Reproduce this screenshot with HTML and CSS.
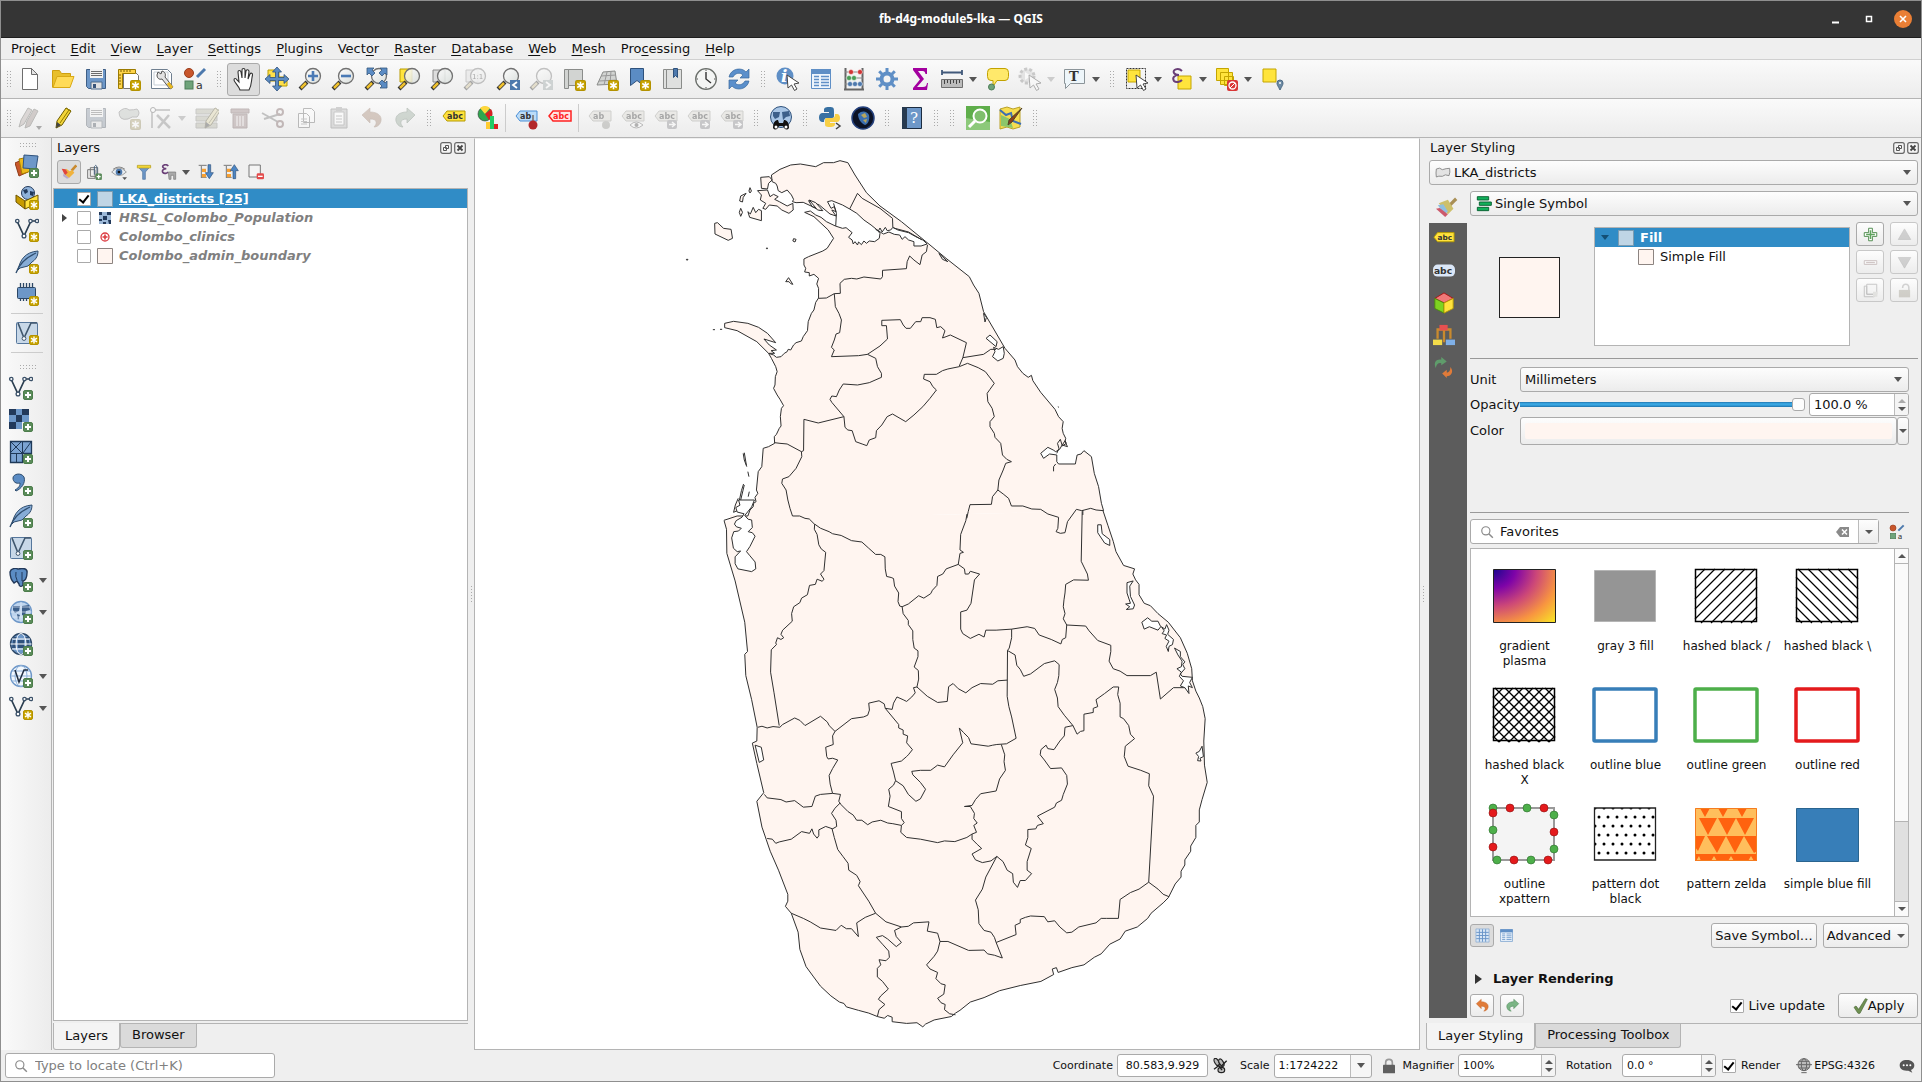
FILE: index.html
```html
<!DOCTYPE html>
<html lang="en">
<head>
<meta charset="utf-8">
<title>fb-d4g-module5-lka — QGIS</title>
<link rel="stylesheet" href="styles.css">
</head>
<body>
<svg class="sprite" aria-hidden="true">
<defs>
<radialGradient id="plasma-r" cx="0" cy="0" r="1.4"><stop offset="0" stop-color="#1c0690"/><stop offset=".25" stop-color="#7e03a8"/><stop offset=".5" stop-color="#cc4778"/><stop offset=".75" stop-color="#f89540"/><stop offset="1" stop-color="#f8e625"/></radialGradient>
<linearGradient id="glass" x1="0" y1="0" x2="1" y2="1"><stop offset="0" stop-color="#fff"/><stop offset="1" stop-color="#d5dbd8"/></linearGradient>
<pattern id="dots" width="9" height="18" patternUnits="userSpaceOnUse"><circle cx="7" cy="12" r="1.500"/><circle cx="3" cy="3" r="1.500"/></pattern>
</defs>
<symbol id="b-new" viewBox="0 0 10 10"><rect x=".5" y=".5" width="9" height="9" rx="1.5" fill="#c8a400" stroke="#b39200"/><path d="M5 1.5v7M2 3.2l6 3.6M8 3.2L2 6.800" stroke="#fff" stroke-width="1.4"/></symbol>
<symbol id="b-add" viewBox="0 0 10 10"><rect x=".5" y=".5" width="9" height="9" rx="1.500" fill="#5b8c5a" stroke="#4c7d4b"/><path d="M5 2v6M2 5h6" stroke="#fff" stroke-width="2"/></symbol>
<symbol id="new" viewBox="0 0 24 24"><path d="M4.500 1.500h9l6 6v15h-15z" fill="#fff" stroke="#6d6d6d"/><path d="M13.500 1.500v6h6z" fill="#e4e4e4" stroke="#6d6d6d"/></symbol>
<symbol id="open" viewBox="0 0 24 24"><path d="M1.500 20.500v-17h7l2 3h9v4" fill="#e8bf2b" stroke="#cf9f10"/><path d="M2 20.500L6 9.500h17l-4 11z" fill="#ffdb58" stroke="#d9a915"/></symbol>
<symbol id="save" viewBox="0 0 24 24"><path d="M2.500 2.500h19v19h-17l-2-2z" fill="#6d97c8" stroke="#3f5f86"/><path d="M6 2h13v9H6z" fill="#f2f2f2"/><path d="M7 4.500h11M7 6.500h11M7 8.500h11" stroke="#6b6b6b"/><path d="M7 15h11v7H7z" fill="#e2e2e2" stroke="#4c6a8c"/><path d="M9 17h3v4H9z" fill="#39557a"/></symbol>
<symbol id="layout" viewBox="0 0 24 24"><path d="M6.500 4.500h11l4 4v13h-15z" fill="#fff" stroke="#777"/><path d="M1.500 2.500h17v4h-13v15h-4z" fill="#ffd44a" stroke="#9c7b00"/><path d="M4 3v2M7 3v2M10 3v2M13 3v2M2 8h2M2 11h2M2 14h2M2 17h2" stroke="#7a6000"/><use href="#b-new" x="13" y="13" width="11" height="11"/></symbol>
<symbol id="manager" viewBox="0 0 24 24"><path d="M1.500 2.500h16l4 4v15h-20z" fill="#fff" stroke="#6f7f90"/><path d="M4 5h14v13H4z" fill="none" stroke="#c5cdd5"/><path d="M8 5l3 2 1-3c3 1 4 3 3 6l8 10-3 2-8-10c-3 1-5-1-5-4z" fill="#e2e2e2" stroke="#555"/><path d="M18 16l4 5" stroke="#e9b91f" stroke-width="3"/></symbol>
<symbol id="style" viewBox="0 0 24 24"><circle cx="6" cy="6" r="4.500" fill="#c8562b" stroke="#9a3d1b"/><rect x="2" y="14" width="8" height="8" fill="#6fa37a" stroke="#4d7d58"/><path d="M14 10l8-8" stroke="#4d79ad" stroke-width="3"/></symbol>
<symbol id="pan" viewBox="0 0 24 24"><path d="M8 23c-1-4-6-8-6-10 0-2 2-2 3 0l2 2L6 5c0-2 2.500-2 3 0l1 6V3c0-2 3-2 3 0v8l1-7c.5-2 3-1.500 3 .5L16 12l2-5c.8-1.500 2.800-1 2.500 1C19 14 20 18 17 23z" fill="#fff" stroke="#333" stroke-width="1.100"/></symbol>
<symbol id="pansel" viewBox="0 0 24 24"><path d="M3 3h11v11H3zM12 10h10v9H12z" fill="#ffe04a" stroke="#b89b00"/><path d="M12 0l4.500 5h-3v5.500H19v-3l5 4.500-5 4.500v-3h-5.500V19h3L12 24l-4.500-5h3v-5.500H5v3L0 12l5-4.500v3h5.500V5h-3z" fill="#5b8cc4" stroke="#2f527c" stroke-width=".8"/></symbol>
<symbol id="lens" viewBox="0 0 24 24"><path d="M9 15l-7 7" stroke="#333" stroke-width="4"/><path d="M8 16l-5 5" stroke="#f0c22e" stroke-width="2.500"/><circle cx="15" cy="9" r="7.500" fill="url(#glass)" fill-opacity=".85" stroke="#717171" stroke-width="1.300"/></symbol>
<symbol id="zin" viewBox="0 0 24 24"><use href="#lens"/><path d="M15 4v10M10 9h10" stroke="#4a7ab5" stroke-width="2.600"/></symbol>
<symbol id="zout" viewBox="0 0 24 24"><use href="#lens"/><path d="M10 9h10" stroke="#4a7ab5" stroke-width="2.600"/></symbol>
<symbol id="zfull" viewBox="0 0 24 24"><use href="#lens"/><path d="M3 1h7L8 3l3 3-3 3-3-3-2 2zM23 1h-7l2 2-3 3 3 3 3-3 2 2zM23 21h-7l2-2-3-3 3-3 3 3 2-2z" fill="#5b8cc4" stroke="#35587f" stroke-width=".8"/></symbol>
<symbol id="zsel" viewBox="0 0 24 24"><path d="M3 2h12v13H3z" fill="#ffe43c" stroke="#b89b00"/><use href="#lens"/></symbol>
<symbol id="zlay" viewBox="0 0 24 24"><path d="M3 3h12v12H3z" fill="#ddd" stroke="#8a8a8a"/><use href="#lens"/></symbol>
<symbol id="zlast" viewBox="0 0 24 24"><use href="#lens"/><path d="M14 13h10v10H14z" fill="#4d79ad"/><path d="M21 15l-4 3 4 3" fill="none" stroke="#fff" stroke-width="1.800"/></symbol>
<symbol id="znext" viewBox="0 0 24 24"><use href="#lens"/><path d="M14 13h10v10H14z" fill="#8aa"/><path d="M17 15l4 3-4 3" fill="none" stroke="#fff" stroke-width="1.800"/></symbol>
<symbol id="mapview" viewBox="0 0 24 24"><path d="M2.500 2.500h4v19h-4zM6.500 2.500h14v16h-14z" fill="#d2d4d2" stroke="#8a8c8a"/><use href="#b-new" x="13" y="13" width="11" height="11"/></symbol>
<symbol id="map3d" viewBox="0 0 24 24"><path d="M8 5l12-1 2 13-20 1z" fill="#d2d4d2" stroke="#8a8c8a"/><path d="M6 9l15-1M4 14l18-1M12 5l-3 13M16 4l-1 13" stroke="#999"/><use href="#b-new" x="13" y="13" width="11" height="11"/></symbol>
<symbol id="bmnew" viewBox="0 0 24 24"><path d="M2.500 1.500h13v17l-6.500-5-6.500 5z" fill="#5b8cc4" stroke="#2f527c"/><use href="#b-new" x="12" y="13" width="11" height="11"/></symbol>
<symbol id="bm" viewBox="0 0 24 24"><path d="M2.500 2.500h3v19h-3zM5.500 2.500h15v19h-15z" fill="#dfe0df" stroke="#8a8c8a"/><path d="M12.500 1.500h4v9l-2-2-2 2z" fill="#4d79ad" stroke="#2f527c"/></symbol>
<symbol id="clock" viewBox="0 0 24 24"><circle cx="12" cy="12" r="10.300" fill="#f4f5f4" stroke="#6b6f6b" stroke-width="1.300"/><path d="M12 5v7l5 4" fill="none" stroke="#333" stroke-width="1.400"/><path d="M12 2.500v1.500M12 20v1.500M2.500 12H4M20 12h1.500" stroke="#555"/></symbol>
<symbol id="refresh" viewBox="0 0 24 24"><path d="M2 10C4 1 15 0 19 5l3-3v9h-9l3-3c-3-3-8-2-10 2z" fill="#5b8fcb" stroke="#3a689c" stroke-width=".7"/><path d="M22 14c-2 9-13 10-17 5l-3 3v-9h9l-3 3c3 3 8 2 10-2z" fill="#5b8fcb" stroke="#3a689c" stroke-width=".7"/></symbol>
<symbol id="cursor" viewBox="0 0 24 24"><path d="M11 8l12 8-5 1 3 5-2.500 1.500L15.500 18 12 21z" fill="#fff" stroke="#444"/></symbol>
<symbol id="table" viewBox="0 0 24 24"><path d="M2.500 2.500h19v19h-19z" fill="#eef5fc" stroke="#5f8fc6"/><path d="M2 2h20v5H2z" fill="#5f8fc6"/><path d="M5 9.500h5M12 9.500h8M5 12.500h5M12 12.500h8M5 15.500h5M12 15.500h8M5 18.500h5M12 18.500h8" stroke="#5f8fc6" stroke-width="1.300"/></symbol>
<symbol id="abacus" viewBox="0 0 24 24"><path d="M3.500 1v21M20.500 1v21M2 22.500h20" stroke="#666" stroke-width="2"/><path d="M3 5h18M3 11h18M3 17h18" stroke="#888"/><g stroke="#fff" stroke-width=".5"><g fill="#d13434"><circle cx="9" cy="5" r="2.500"/><circle cx="18" cy="5" r="2.500"/></g><g fill="#4a9c55"><circle cx="7" cy="11" r="2.500"/><circle cx="12" cy="11" r="2.500"/></g><g fill="#4d79ad"><circle cx="8" cy="17" r="2.500"/><circle cx="13" cy="17" r="2.500"/><circle cx="18" cy="17" r="2.500"/></g></g></symbol>
<symbol id="gear" viewBox="0 0 24 24"><g fill="none" stroke="#5f8fc6"><circle cx="12" cy="12" r="5.500" stroke-width="4"/><path d="M12 1v5M12 18v5M1 12h5M18 12h5M4.200 4.200l3.500 3.500M16.300 16.300l3.500 3.500M19.800 4.200l-3.500 3.500M7.700 16.300l-3.500 3.500" stroke-width="3"/></g></symbol>
<symbol id="sigma" viewBox="0 0 24 24"><path d="M5 1h14v6h-1.500c-.5-2-1-3-3-3H10l6 8-7 8h6c2.500 0 3.500-1 4-4H20l-1 7H5v-2l7-8.500L5 3z" fill="#a3009f"/></symbol>
<symbol id="ruler" viewBox="0 0 24 24"><path d="M2 5.500h20M2 3v5M22 3v5" stroke="#41597a" stroke-width="1.800"/><path d="M1.500 12.500h21v8h-21z" fill="#bcbcbc" stroke="#6f6f6f"/><path d="M4.500 13v4M7.500 13v3M10.500 13v4M13.500 13v3M16.500 13v4M19.500 13v3" stroke="#444"/></symbol>
<symbol id="tip" viewBox="0 0 24 24"><path d="M5 1.500h14q3.500 0 3.500 4v4q0 4-3.500 4h-8l-4 6v-6H5q-3.500 0-3.500-4v-4q0-4 3.500-4z" fill="#ffe96b" stroke="#c2a200"/><circle cx="5.500" cy="20" r="3" fill="#6fa37a" stroke="#4d7d58"/></symbol>
<symbol id="action" viewBox="0 0 24 24"><circle cx="9" cy="9" r="7" fill="#ccc" stroke="#888" stroke-width="3" stroke-dasharray="3 2"/><path d="M7 5l6 4-6 4z" fill="#fff"/><use href="#cursor"/></symbol>
<symbol id="annot" viewBox="0 0 24 24"><path d="M1.500 2.500h20v14h-14l-5 5v-5h-1z" fill="#eef6fa" stroke="#8b9499"/></symbol>
<symbol id="select" viewBox="0 0 24 24"><path d="M1.500 1.500h19v20h-19z" fill="none" stroke="#333" stroke-dasharray="2 1"/><path d="M3 3h12v12H3z" fill="#ffe43c" stroke="#c4a500"/><use href="#cursor"/></symbol>
<symbol id="selexp" viewBox="0 0 24 24"><path d="M8 9h13v13H8z" fill="#ffe43c" stroke="#c4a500"/><path d="M12 4C8 0 2 3 4 6c1 2 3 2 5 2-5 0-7 3-5 6 2 2 6 1 8-1" fill="none" stroke="#6a3f77" stroke-width="2"/></symbol>
<symbol id="desel" viewBox="0 0 24 24"><path d="M1.500 1.500h12v12h-12zM5.500 5.500h12v12h-12zM9.500 9.500h9v9h-9z" fill="#ffe43c" stroke="#c4a500"/><rect x="12" y="13" width="11" height="11" rx="2" fill="#d93636"/><circle cx="17.500" cy="18.500" r="3.500" fill="none" stroke="#fff" stroke-width="1.300"/><path d="M15 21l5-5" stroke="#fff"/></symbol>
<symbol id="selloc" viewBox="0 0 24 24"><path d="M2 2h13v13H2z" fill="#ffe43c" stroke="#c4a500"/><path d="M19 23c-2-4-3-5-3-7a3 3 0 016 0c0 2-1 3-3 7z" fill="#6d8ba5" stroke="#4d6b85"/><circle cx="19" cy="16" r="1" fill="#fff"/></symbol>
<symbol id="pencil" viewBox="0 0 24 24"><path d="M5 22l1-7L15 2l5 3L11 19z" fill="#f3d53a" stroke="#6b5b00"/><path d="M15 2l5 3M9 17L18 4" stroke="#8f7a00"/><path d="M5 22l1-6 4 3z" fill="#444"/></symbol>
<symbol id="pencils" viewBox="0 0 24 24"><path d="M1 21l2-7L10 2l4 2-8 14z" fill="#c9a79a" stroke="#665"/><path d="M7 22l2-7L16 3l4 2-8 15z" fill="#b8897a" stroke="#665"/><path d="M18 20h6l-3 4z" fill="#444"/></symbol>
<symbol id="addpoly" viewBox="0 0 24 24"><path d="M2 6q6-6 10-2 5 0 8-1 4 4 0 8-5-1-9 2-9 2-9-7z" fill="#b5c6b5" stroke="#777"/><use href="#b-new" x="13" y="13" width="11" height="11"/></symbol>
<symbol id="vertex" viewBox="0 0 24 24"><path d="M3 22V4h18" fill="none" stroke="#777" stroke-width="1.500"/><circle cx="4" cy="4" r="2.500" fill="#fff" stroke="#555"/><path d="M8 9l13 13M20 9L9 22" stroke="#888" stroke-width="2.500"/></symbol>
<symbol id="multi" viewBox="0 0 24 24"><path d="M1 3h21v5H1zM1 10h21v5H1zM1 17h21v5H1z" fill="#b6b67c" stroke="#887"/><use href="#pencil" x="5"/></symbol>
<symbol id="trash" viewBox="0 0 24 24"><path d="M3 3h18v4H3zM5 8h14v14H5z" fill="#c27a7a" stroke="#955"/><path d="M9 10v10M12 10v10M15 10v10" stroke="#fff"/></symbol>
<symbol id="cut" viewBox="0 0 24 24"><path d="M1 7l16 9M3 13l16-5" stroke="#777" stroke-width="2"/><circle cx="19" cy="6" r="3" fill="none" stroke="#a55" stroke-width="2"/><circle cx="19" cy="18" r="3" fill="none" stroke="#a55" stroke-width="2"/></symbol>
<symbol id="copy" viewBox="0 0 24 24"><path d="M9.500 2.500h8l3 3v11h-11zM4.500 7.500h8l3 3v11h-11z" fill="#fff" stroke="#666"/><path d="M7 13h6M7 15.500h6M7 18h6" stroke="#888"/></symbol>
<symbol id="paste" viewBox="0 0 24 24"><path d="M4 3h16v19H4z" fill="#bbb" stroke="#777"/><path d="M7 6h10v13H7z" fill="#fff" stroke="#888"/><path d="M9 1h6v4H9z" fill="#999"/><path d="M9 10h6M9 13h6M9 16h6" stroke="#888"/></symbol>
<symbol id="undo" viewBox="0 0 24 24"><path d="M2 9l8-7v4c8 0 12 4 11 9-1 4-4 6-7 6 3-3 4-8-4-8v4z" fill="#e07b39" stroke="#bd6228" stroke-width=".6"/></symbol>
<symbol id="redo" viewBox="0 0 24 24"><path d="M22 9l-8-7v4C6 6 2 10 3 15c1 4 4 6 7 6-3-3-4-8 4-8v4z" fill="#7bb585" stroke="#4d8659" stroke-width=".8"/></symbol>
<symbol id="abc" viewBox="0 0 24 24"><path d="M1 10l4-5h18v10H5z" fill="#ffe23d" stroke="#b59a00"/></symbol>
<symbol id="diagram" viewBox="0 0 24 24"><circle cx="10" cy="8" r="7" fill="#2fa84f" stroke="#333" stroke-width=".6"/><path d="M10 8L5 2a8 8 0 0110 0z" fill="#ffd83a"/><path d="M10 8l6-5a8 8 0 01-2 11z" fill="#d62222"/><path d="M11 16h4v7h-4z" fill="#fc3"/><path d="M15 10h4v13h-4z" fill="#2c6"/><path d="M19 18h4v5h-4z" fill="#d22"/></symbol>
<symbol id="abpin" viewBox="0 0 24 24"><path d="M1 10l4-5h17v10H5z" fill="#bcdcf8" stroke="#4a8fd6"/><path d="M18 9v7" stroke="#888" stroke-width="2"/><circle cx="18" cy="19" r="4.500" fill="#b3282b"/></symbol>
<symbol id="abcred" viewBox="0 0 24 24"><path d="M1 10l4-5h18v10H5z" fill="#ffe4e4" stroke="#f22" stroke-width="1.500"/></symbol>
<symbol id="abcoff" viewBox="0 0 24 24"><path d="M1 10l4-5h18v10H5z" fill="#ddd9c0" stroke="#998"/><circle cx="18" cy="19" r="4" fill="#998"/></symbol>
<symbol id="abceye" viewBox="0 0 24 24"><path d="M1 10l4-5h18v10H5z" fill="#ddd9c0" stroke="#998"/><path d="M9 19q6-6 13 0-7 6-13 0z" fill="#fff" stroke="#666"/><circle cx="15.500" cy="19" r="2" fill="#555"/></symbol>
<symbol id="abcbox" viewBox="0 0 24 24"><path d="M1 10l4-5h18v10H5z" fill="#ddd9c0" stroke="#998"/><rect x="13" y="14" width="10" height="9" rx="2" fill="#889"/><path d="M15 18.500h6M18 16l3 2.500-3 2.500" stroke="#fff" stroke-width="1.500" fill="none"/></symbol>
<symbol id="globe" viewBox="0 0 24 24"><circle cx="12" cy="12" r="10.500" fill="#6d97c8" stroke="#2c4766" stroke-width="1.300"/><path d="M4 8h3v8H3zM17 8h3l1 8h-4zM9 8h6v8H9zM4 5h4v2H3zM16 5h4l1 2h-5z" fill="#2f527c"/><ellipse cx="12" cy="12" rx="5" ry="10.500" fill="none" stroke="#fff"/><path d="M1.500 12h21M3 7h18M3 17h18" stroke="#fff"/></symbol>
<symbol id="wms" viewBox="0 0 24 24"><circle cx="12" cy="12" r="10.500" fill="#bfd5ee" stroke="#6d97c8" stroke-width="1.300"/><path d="M4 6h7l-1 5-4 2-2-3zM13 6l7-1 1 5-4 1-1 5-3-1zM8 14l3 1-2 5z" fill="#3c5f8a"/><path d="M1.500 12h21M12 2v20M3 7h18M3 17h18" stroke="#dfeaf6" stroke-width=".7"/></symbol>
<symbol id="wfs" viewBox="0 0 24 24"><circle cx="12" cy="12" r="10.500" fill="#f3f8fd" stroke="#6d97c8" stroke-width="1.300"/><ellipse cx="12" cy="12" rx="6" ry="10.500" fill="none" stroke="#8fb2da"/><path d="M2 12h20M3 7h18M3 17h18" stroke="#8fb2da"/><path d="M6 6l4 12 5-12h4" fill="none" stroke="#222f40" stroke-width="1.500"/></symbol>
<symbol id="meta" viewBox="0 0 24 24"><circle cx="12" cy="11" r="10.500" fill="#a9c6e6" stroke="#2f527c"/><path d="M4 6h7l-1 5-4 2-2-3zM13 6l7-1 1 5-4 1-3 3z" fill="#3c5f8a"/><path d="M4 22q0-7 4-8h1l1 3h4l1-3h1q4 1 4 8-2 3-5 0l-1-2h-4l-1 2q-3 3-5 0z" fill="#111"/><circle cx="7" cy="21" r="1.500" fill="#fff"/><circle cx="17" cy="21" r="1.500" fill="#fff"/></symbol>
<symbol id="python" viewBox="0 0 24 24"><path d="M11 1c5 0 5 1 5 5v4c0 2-1 2-3 2H9c-2 0-3 1-3 4H4c-4 0-4-9 0-9h7V6H6V4c0-2 1-3 5-3z" fill="#3871a3"/><path d="M12 21c-5 0-5-1-5-4v-3c0-2 1-2 3-2h4c2 0 3-1 3-4h2c4 0 4 8 0 8h-7v1h5v1c0 2-1 3-5 3z" fill="#f7cf45"/><path d="M18 17l4 3-4 3" fill="none" stroke="#444" stroke-width="1.500"/></symbol>
<symbol id="earth" viewBox="0 0 24 24"><circle cx="12" cy="12" r="11" fill="#0b1226" stroke="#24407c" stroke-width="1.500"/><path d="M7 8c4-4 9-3 11 1 1 5-1 9-4 10-4-2-7-6-7-11z" fill="#3c6fb0"/><path d="M10 9l4-2 2 4-3 1zM12 14l4-1-1 4z" fill="#b9a65c"/></symbol>
<symbol id="help" viewBox="0 0 24 24"><path d="M2.500 1.500h19v21h-19z" fill="#6d97c8" stroke="#1b2b3f"/><path d="M2 1h5v22H2z" fill="#26394f"/></symbol>
<symbol id="qms" viewBox="0 0 24 24"><path d="M0 0h24v24H0z" fill="#5fae4b"/><path d="M0 24V12l24 4v8z" fill="#8cc97a"/><circle cx="14" cy="10" r="6.500" fill="#7fbf6d" stroke="#fff" stroke-width="2"/><path d="M9 15l-6 6" stroke="#fff" stroke-width="3"/></symbol>
<symbol id="osm" viewBox="0 0 24 24"><path d="M1 3l7-2 6 2 7-2v20l-7 2-6-2-7 2z" fill="#f7dd4f" stroke="#b9a128"/><path d="M2 9l9 4 3 9-12-2z" fill="#8cc66a"/><path d="M1 4l6 5 5-2 2 8 8 3" fill="none" stroke="#3f6fb0" stroke-width="2"/><path d="M23 2L13 16l-4 3 1-5z" fill="#8a3f1c" stroke="#542"/></symbol>
<symbol id="v" viewBox="0 0 24 24"><path d="M2 3l7 15 7-15h6" fill="none" stroke="#2b3e50" stroke-width="1.700"/><g fill="#fff" stroke="#3a5068" stroke-width="1.300"><circle cx="2.300" cy="3" r="1.700"/><circle cx="15.500" cy="3" r="1.700"/><circle cx="22" cy="3" r="1.700"/><circle cx="9" cy="18" r="1.900"/></g></symbol>
<symbol id="vbox" viewBox="0 0 24 24"><rect x="1.500" y="1.500" width="21" height="21" rx="1" fill="#c8d8e8" stroke="#56779c"/><path d="M3 2l6 15 7-15h6" fill="none" stroke="#3f566d" stroke-width="1.600"/><circle cx="9" cy="17.500" r="1.900" fill="#fff" stroke="#3f566d"/></symbol>
<symbol id="feather" viewBox="0 0 24 24"><path d="M3 20C5 10 10 2 23 1c0 6-3 9-6 11l-4 4-8 2z" fill="#86acd6" stroke="#2f4d6e"/><path d="M1 23C4 14 10 8 21 3" fill="none" stroke="#2f4d6e" stroke-width="1.300"/></symbol>
<symbol id="comma" viewBox="0 0 24 24"><path d="M6 18c5-3 5-5 5-7-4 1-7-1-7-5s8-6 11-1c2 6-3 12-8 14z" fill="#5b8cc4" stroke="#2f4d6e"/></symbol>
<symbol id="chip" viewBox="0 0 24 24"><path d="M5.500 1v4M8.500 1v4M11.500 1v4M14.500 1v4M17.500 1v4M5.500 15v4M8.500 15v4M11.500 15v4" stroke="#2c4766" stroke-width="1.300"/><rect x="2.500" y="5.500" width="18" height="11" rx="1" fill="#6d97c8" stroke="#2c4766"/></symbol>
<symbol id="raster" viewBox="0 0 24 24"><path d="M0 1h20v13h-7v7H0z" fill="#6d97c8"/><path d="M0 1h7v6H0zM13 1h7v6h-7zM7 7h6v7H7zM0 14h7v7H0z" fill="#22395a"/></symbol>
<symbol id="mesh" viewBox="0 0 24 24"><path d="M1.500 1.500h21v12h-9v9h-12z" fill="#7ba3d2" stroke="#1f3958" stroke-width="1.300"/><path d="M13.500 1v21M1 13.500h21M1 1l12 12M13 1L1 13M22 2L14 13M7.500 13v9" stroke="#1f3958"/></symbol>
<symbol id="elephant" viewBox="0 0 24 24"><path d="M1 4C2 0 7 0 9 1c4-1 10-1 9 4 0 5-2 8-4 8v4c-1 2-4 2-4-1l-2-3-3 2C3 13 1 8 1 4z" fill="#5b8cc4" stroke="#22395a" stroke-width="1.400"/><path d="M7 4q-1 5 1 8M13 4v9" fill="none" stroke="#22395a"/></symbol>
<symbol id="datasrc" viewBox="0 0 24 24"><path d="M0 9l9-4 4 13-9 4z" fill="#c9582a" stroke="#8f3b18"/><path d="M4 5l10-2 2 14-9 3z" fill="#ecb91c" stroke="#a98000"/><path d="M9 1l14 1-2 13-13-1z" fill="#6d97c8" stroke="#2f527c"/></symbol>
<symbol id="geopkg" viewBox="0 0 24 24"><circle cx="13" cy="7" r="6.500" fill="#8fb2da" stroke="#22395a"/><path d="M8 4l4-1 1 3-3 2zM15 5l4 1-1 4-3-1z" fill="#22395a"/><path d="M1 9l9 6v8l-9-7z" fill="#c79b00" stroke="#6e5500"/><path d="M10 15l13-6v8l-13 6z" fill="#ffe23d" stroke="#6e5500"/></symbol>
<symbol id="brush" viewBox="0 0 24 24"><path d="M22 3l-8 8" stroke="#a98f55" stroke-width="3.500"/><path d="M3 8l10-4 6 10-6 6z" fill="#cdc06c"/><path d="M2 10l6-1 5 8-4 3z" fill="#8fbfe0"/><path d="M0 14l4-1 9 7-3 3z" fill="#cc5a6c"/></symbol>
<symbol id="brushy" viewBox="0 0 24 24"><path d="M23 2l-7 8" stroke="#c98a2e" stroke-width="4"/><path d="M8 7l5 4 4-2 3 4-8 8-8-6z" fill="#f0b23c"/><path d="M1 7l6 1 3 5-4 4z" fill="#e0453c"/><path d="M4 14l8 7-3 1-6-4z" fill="#b9a9c9"/></symbol>
<symbol id="group" viewBox="0 0 24 24"><path d="M2.500 8.500h11v13h-11zM6.500 5.500h11v13h-11z" fill="none" stroke="#777" stroke-width="1.500"/><path d="M12.500 16V4q2-4 4 0v12" fill="none" stroke="#46627e" stroke-width="1.500"/><use href="#b-add" x="14" y="14" width="10" height="10"/></symbol>
<symbol id="eye" viewBox="0 0 24 24"><path d="M1 12q11-12 22 0-11 11-22 0z" fill="#e9eef2" stroke="#777"/><circle cx="12" cy="12" r="5" fill="#4d79ad"/><circle cx="12" cy="12" r="2" fill="#111"/><path d="M3 8q9-7 18 0" fill="none" stroke="#888" stroke-width="1.500"/><path d="M17 20h7l-3.500 4z" fill="#555"/></symbol>
<symbol id="filter" viewBox="0 0 24 24"><path d="M2 3h20l-8 9v11h-4V12z" fill="#6d97c8" stroke="#4a6f9c"/><path d="M2 2h20v4H2z" fill="#f1d53a" stroke="#bfa51c"/></symbol>
<symbol id="eps" viewBox="0 0 24 24"><path d="M11 3C7-1 1 2 3 5c1 2 3 2 5 2-5 0-7 3-5 6 2 2 6 1 8-1" fill="none" stroke="#6a3f77" stroke-width="2.500"/><path d="M11 12h11v11h-3v-6h-4v6h-3z" fill="#aaa" stroke="#777"/></symbol>
<symbol id="expand" viewBox="0 0 24 24"><path d="M5 3v18M1 2h12M5 20h8" stroke="#777" fill="none" stroke-width="1.500"/><path d="M6 7h6v5H6zM6 15h6v5H6z" fill="#f7a032"/><path d="M15 1h4v12h4l-6 9-6-9h4z" fill="#4d86c4" stroke="#2f527c"/></symbol>
<symbol id="collapse" viewBox="0 0 24 24"><path d="M5 3v18M1 2h12M5 20h8" stroke="#777" fill="none" stroke-width="1.500"/><path d="M6 7h6v5H6zM6 15h6v5H6z" fill="#f7a032"/><path d="M15 22h4V10h4l-6-9-6 9h4z" fill="#4d86c4" stroke="#2f527c"/></symbol>
<symbol id="remove" viewBox="0 0 24 24"><path d="M1.500 1.500h17v18h-17z" fill="#f4f4f4" stroke="#777" stroke-width="1.500"/><rect x="13" y="14" width="11" height="9" rx="2" fill="#e34b4b"/><path d="M15 18.500h7" stroke="#fff" stroke-width="2"/></symbol>
<symbol id="abcpill" viewBox="0 0 24 24"><rect x="0" y="5" width="24" height="13" rx="5" fill="#dbe7f7"/></symbol>
<symbol id="cube" viewBox="0 0 24 24"><path d="M12 1l10 6-10 5L2 7z" fill="#f07878" stroke="#a11"/><path d="M2 7l10 5v11L2 18z" fill="#7ed321" stroke="#4c8a0d"/><path d="M22 7l-10 5v11l10-5z" fill="#ffe23d" stroke="#b59a00"/></symbol>
<symbol id="tree" viewBox="0 0 24 24"><path d="M5 16V6h14v10M12 6v14" stroke="#c98a2e" stroke-width="2.500" fill="none"/><path d="M7 1h9v6H7z" fill="#e65050"/><path d="M0 17h10v6H0z" fill="#f3dc4a"/><path d="M14 17h10v6H14z" fill="#7fb0e8"/></symbol>
<symbol id="history" viewBox="0 0 24 24"><path d="M3 13C0 7 4 3 9 4V1l6 5-6 4V8C6 7 4 9 3 13z" fill="#5f9c6b"/><path d="M19 12c4 5 1 10-4 10v2l-5-5 5-4v3c3 0 4-3 4-6z" fill="#e07b39"/></symbol>
<symbol id="search" viewBox="0 0 24 24"><circle cx="10" cy="10" r="7" fill="none" stroke="#8a8a8a" stroke-width="2"/><path d="M15 15l7 7" stroke="#8a8a8a" stroke-width="2.500"/></symbol>
<symbol id="poly" viewBox="0 0 24 24"><path d="M2 6q5-3 9 1 6-2 11-2 1 6-1 11-6-3-10 1-6-1-9 1-1-6 0-12z" fill="#e3e3e3" stroke="#888" stroke-width="1.400"/></symbol>
<symbol id="single" viewBox="0 0 24 24"><path d="M2 1h17v5H2zM5 9h18v5H5zM2 17h17v5H2z" fill="#12b05b" stroke="#075f30" stroke-width="1.400"/></symbol>
<symbol id="float" viewBox="0 0 12 12"><rect x=".7" y=".7" width="10.600" height="10.600" rx="2" fill="#f4f4f4" stroke="#666" stroke-width="1.200"/><path d="M5.500 3.500h3v3h-3zM3.500 5.500h3v3h-3z" fill="none" stroke="#555"/></symbol>
<symbol id="close" viewBox="0 0 12 12"><rect x=".7" y=".7" width="10.600" height="10.600" rx="2" fill="#f4f4f4" stroke="#666" stroke-width="1.200"/><path d="M3.500 3.500l5 5M8.500 3.500l-5 5" stroke="#444" stroke-width="1.800"/></symbol>
<symbol id="grid" viewBox="0 0 24 24"><path d="M1.500 1.500h21v21h-21z" fill="#d8e6f5" stroke="#7ea4d0"/><path d="M7 2v20M12 2v20M17 2v20M2 7h20M2 12h20M2 17h20" stroke="#6793c8" stroke-width="1.500"/></symbol>
<symbol id="crosshair" viewBox="0 0 24 24"><g fill="#bbb" stroke="#222" stroke-width="1.800"><ellipse cx="7" cy="6" rx="3" ry="6" transform="rotate(-30 7 6)"/><ellipse cx="14" cy="7" rx="3" ry="6" transform="rotate(-30 14 7)"/><ellipse cx="14" cy="18" rx="5" ry="4"/></g><path d="M3 17l8-6M13 13l9-9M9 10l6 8" stroke="#222" stroke-width="2"/></symbol>
<symbol id="lock" viewBox="0 0 24 24"><path d="M7 11V7q0-5 5-5t5 5v4" fill="none" stroke="#999" stroke-width="2.500"/><rect x="3" y="10" width="18" height="13" rx="1" fill="#5f5f5f"/></symbol>
<symbol id="crs" viewBox="0 0 24 24"><circle cx="12" cy="10" r="9" fill="#bbb" stroke="#666" stroke-width="1.500"/><ellipse cx="12" cy="10" rx="4" ry="9" fill="none" stroke="#666" stroke-width="1.500"/><path d="M0 10h24M4 5h16M4 15h16M8 22h8" stroke="#666" stroke-width="1.500"/></symbol>
<symbol id="msg" viewBox="0 0 24 24"><path d="M12 3c7 0 11 4 11 8s-2 6-5 7l2 4-6-3C5 20 1 16 1 11s4-8 11-8z" fill="#555"/><circle cx="7" cy="11" r="1.500" fill="#fff"/><circle cx="12" cy="11" r="1.500" fill="#fff"/><circle cx="17" cy="11" r="1.500" fill="#fff"/></symbol>
<symbol id="check" viewBox="0 0 24 24"><path d="M3 14l3-2 4 5L20 1l3 1L12 23H9z" fill="#6f9152" stroke="#4c6636"/></symbol>
<symbol id="plus" viewBox="0 0 24 24"><path d="M9 2h6v7h7v6h-7v7H9v-7H2V9h7z" fill="#fff" stroke="#4c8a4b" stroke-width="1.500"/><path d="M12 5v14M5 12h14" stroke="#5fa35e" stroke-width="2.500"/></symbol>
<symbol id="minus" viewBox="0 0 24 24"><path d="M2 9h20v6H2z" fill="#fff" stroke="#b66" stroke-width="1.500"/><path d="M5 12h14" stroke="#c77" stroke-width="2"/></symbol>
<symbol id="up" viewBox="0 0 24 24"><path d="M12 3l10 17H2z" fill="#999" stroke="#777"/></symbol>
<symbol id="down" viewBox="0 0 24 24"><path d="M12 21L2 4h20z" fill="#999" stroke="#777"/></symbol>
<symbol id="dup" viewBox="0 0 24 24"><path d="M2 5h4v13h12v4H2zM6 2h16v16H6z" fill="#f5f5f5" stroke="#777" stroke-width="1.500"/><path d="M16 14h7v8h-7z" fill="#ccb"/></symbol>
<symbol id="unlock" viewBox="0 0 24 24"><path d="M9 8q0-6 5-6t5 6v4" fill="none" stroke="#999" stroke-width="2.500"/><rect x="3" y="11" width="18" height="12" fill="#a99a6c"/></symbol>
</svg>

<div class="window">
<header class="titlebar">
  <h1>fb-d4g-module5-lka — QGIS</h1>
  <div class="wm">
    <button aria-label="Minimize"><svg viewBox="0 0 18 18"><path d="M6 12.500h7" stroke="#fff" stroke-width="2"/></svg></button>
    <button aria-label="Maximize"><svg viewBox="0 0 18 18"><path d="M6.500 6.500h5v5h-5z" fill="none" stroke="#fff" stroke-width="1.500"/></svg></button>
    <button aria-label="Close"><svg viewBox="0 0 18 18"><circle cx="9" cy="9" r="9" fill="#ea7f35"/><path d="M6 6l6 6M12 6l-6 6" stroke="#fff" stroke-width="1.600"/></svg></button>
  </div>
</header>
<nav class="menubar">
  <button>Pro<u>j</u>ect</button><button><u>E</u>dit</button><button><u>V</u>iew</button><button><u>L</u>ayer</button><button><u>S</u>ettings</button><button><u>P</u>lugins</button><button>Vect<u>o</u>r</button><button><u>R</u>aster</button><button><u>D</u>atabase</button><button><u>W</u>eb</button><button><u>M</u>esh</button><button>Pro<u>c</u>essing</button><button><u>H</u>elp</button>
</nav>
<div class="toolbar">
  <i class="grip"></i>
  <button class="tool" aria-label="New project"><svg><use href="#new"/></svg></button>
  <button class="tool" aria-label="Open project"><svg><use href="#open"/></svg></button>
  <button class="tool" aria-label="Save project"><svg><use href="#save"/></svg></button>
  <button class="tool" aria-label="New layout"><svg><use href="#layout"/></svg></button>
  <button class="tool" aria-label="Layout manager"><svg><use href="#manager"/></svg></button>
  <button class="tool" aria-label="Style manager"><svg viewBox="0 0 24 24"><use href="#style"/><text x="13" y="22" class="glyph">a</text></svg></button>
  <i class="grip"></i>
  <button class="tool on" aria-label="Pan map"><svg><use href="#pan"/></svg></button>
  <button class="tool" aria-label="Pan to selection"><svg><use href="#pansel"/></svg></button>
  <button class="tool" aria-label="Zoom in"><svg><use href="#zin"/></svg></button>
  <button class="tool" aria-label="Zoom out"><svg><use href="#zout"/></svg></button>
  <button class="tool" aria-label="Zoom full"><svg><use href="#zfull"/></svg></button>
  <button class="tool" aria-label="Zoom to selection"><svg><use href="#zsel"/></svg></button>
  <button class="tool" aria-label="Zoom to layer"><svg><use href="#zlay"/></svg></button>
  <button class="tool" disabled aria-label="Zoom to native resolution"><svg viewBox="0 0 24 24"><use href="#zlay"/><text x="9" y="12" class="glyph s7">1:1</text></svg></button>
  <button class="tool" aria-label="Zoom last"><svg><use href="#zlast"/></svg></button>
  <button class="tool" disabled aria-label="Zoom next"><svg><use href="#znext"/></svg></button>
  <button class="tool" aria-label="New map view"><svg><use href="#mapview"/></svg></button>
  <button class="tool" aria-label="New 3D map view"><svg><use href="#map3d"/></svg></button>
  <button class="tool" aria-label="New bookmark"><svg><use href="#bmnew"/></svg></button>
  <button class="tool" aria-label="Show bookmarks"><svg><use href="#bm"/></svg></button>
  <button class="tool" aria-label="Temporal controller"><svg><use href="#clock"/></svg></button>
  <button class="tool" aria-label="Refresh"><svg><use href="#refresh"/></svg></button>
  <i class="grip"></i>
  <button class="tool" aria-label="Identify features"><svg viewBox="0 0 24 24"><circle cx="9" cy="9" r="8.500" fill="#5f8fc6"/><text x="5" y="15" class="glyph info">i</text><use href="#cursor"/></svg></button>
  <button class="tool" aria-label="Open attribute table"><svg><use href="#table"/></svg></button>
  <button class="tool" aria-label="Field calculator"><svg><use href="#abacus"/></svg></button>
  <button class="tool" aria-label="Toolbox"><svg><use href="#gear"/></svg></button>
  <button class="tool" aria-label="Statistical summary"><svg><use href="#sigma"/></svg></button>
  <button class="tool drop" aria-label="Measure"><svg><use href="#ruler"/></svg></button>
  <button class="tool" aria-label="Map tips"><svg><use href="#tip"/></svg></button>
  <button class="tool drop" disabled aria-label="Run feature action"><svg><use href="#action"/></svg></button>
  <button class="tool drop" aria-label="Text annotation"><svg viewBox="0 0 24 24"><use href="#annot"/><text x="6" y="14" class="glyph serif">T</text></svg></button>
  <i class="grip wide"></i>
  <button class="tool drop" aria-label="Select features"><svg><use href="#select"/></svg></button>
  <button class="tool drop" aria-label="Select by expression"><svg><use href="#selexp"/></svg></button>
  <button class="tool drop" aria-label="Deselect features"><svg><use href="#desel"/></svg></button>
  <button class="tool" aria-label="Select by location"><svg><use href="#selloc"/></svg></button>
</div>
<div class="toolbar">
  <i class="grip"></i>
  <button class="tool" disabled aria-label="Current edits"><svg><use href="#pencils"/></svg></button>
  <button class="tool" aria-label="Toggle editing"><svg><use href="#pencil"/></svg></button>
  <button class="tool" disabled aria-label="Save layer edits"><svg><use href="#save"/></svg></button>
  <button class="tool" disabled aria-label="Add polygon feature"><svg><use href="#addpoly"/></svg></button>
  <button class="tool drop" disabled aria-label="Vertex tool"><svg><use href="#vertex"/></svg></button>
  <button class="tool" disabled aria-label="Modify attributes"><svg><use href="#multi"/></svg></button>
  <button class="tool" disabled aria-label="Delete selected"><svg><use href="#trash"/></svg></button>
  <button class="tool" disabled aria-label="Cut"><svg><use href="#cut"/></svg></button>
  <button class="tool" disabled aria-label="Copy"><svg><use href="#copy"/></svg></button>
  <button class="tool" disabled aria-label="Paste"><svg><use href="#paste"/></svg></button>
  <button class="tool" disabled aria-label="Undo"><svg><use href="#undo"/></svg></button>
  <button class="tool" disabled aria-label="Redo"><svg><use href="#redo"/></svg></button>
  <i class="grip"></i>
  <button class="tool" aria-label="Layer labeling"><svg viewBox="0 0 24 24"><use href="#abc"/><text x="5" y="13" class="glyph abc">abc</text></svg></button>
  <button class="tool" aria-label="Layer diagram"><svg><use href="#diagram"/></svg></button>
  <i class="sep"></i>
  <button class="tool" aria-label="Highlight pinned labels"><svg viewBox="0 0 24 24"><use href="#abpin"/><text x="5" y="13" class="glyph abc">ab</text></svg></button>
  <button class="tool" aria-label="Show unplaced labels"><svg viewBox="0 0 24 24"><use href="#abcred"/><text x="5" y="13" class="glyph abc red">abc</text></svg></button>
  <i class="sep"></i>
  <button class="tool" disabled aria-label="Pin labels"><svg viewBox="0 0 24 24"><use href="#abcoff"/><text x="5" y="13" class="glyph abc">ab</text></svg></button>
  <button class="tool" disabled aria-label="Show or hide labels"><svg viewBox="0 0 24 24"><use href="#abceye"/><text x="5" y="13" class="glyph abc">abc</text></svg></button>
  <button class="tool" disabled aria-label="Move label"><svg viewBox="0 0 24 24"><use href="#abcbox"/><text x="5" y="13" class="glyph abc">abc</text></svg></button>
  <button class="tool" disabled aria-label="Rotate label"><svg viewBox="0 0 24 24"><use href="#abcbox"/><text x="5" y="13" class="glyph abc">abc</text></svg></button>
  <button class="tool" disabled aria-label="Change label"><svg viewBox="0 0 24 24"><use href="#abcbox"/><text x="5" y="13" class="glyph abc">abc</text></svg></button>
  <i class="grip"></i>
  <button class="tool" aria-label="Metadata search"><svg><use href="#meta"/></svg></button>
  <i class="grip"></i>
  <button class="tool" aria-label="Python console"><svg><use href="#python"/></svg></button>
  <button class="tool" aria-label="Globe"><svg><use href="#earth"/></svg></button>
  <i class="grip"></i>
  <button class="tool" aria-label="Help contents"><svg viewBox="0 0 24 24"><use href="#help"/><text x="10" y="17" class="glyph help">?</text></svg></button>
  <i class="grip"></i><i class="grip wide"></i>
  <button class="tool" aria-label="Search map services"><svg><use href="#qms"/></svg></button>
  <button class="tool" aria-label="Map services"><svg><use href="#osm"/></svg></button>
  <i class="grip"></i>
</div>

<main class="work">
<aside class="sidebar">
  <i class="grip-h"></i>
  <div class="tools-a">
    <button aria-label="Data source manager"><svg><use href="#datasrc"/><use href="#b-add" x="14" y="14" width="10" height="10"/></svg></button>
    <button aria-label="New GeoPackage layer"><svg><use href="#geopkg"/><use href="#b-new" x="14" y="14" width="10" height="10"/></svg></button>
    <button aria-label="New shapefile layer"><svg><use href="#v"/><use href="#b-new" x="14" y="14" width="10" height="10"/></svg></button>
    <button aria-label="New SpatiaLite layer"><svg><use href="#feather"/><use href="#b-new" x="14" y="14" width="10" height="10"/></svg></button>
    <button aria-label="New scratch layer"><svg><use href="#chip"/><use href="#b-new" x="14" y="14" width="10" height="10"/></svg></button>
    <i class="sep-h"></i>
    <button aria-label="New virtual layer"><svg><use href="#vbox"/><use href="#b-new" x="14" y="14" width="10" height="10"/></svg></button>
    <i class="sep-h"></i>
  </div>
  <i class="grip-h"></i>
  <div class="tools-b">
    <button aria-label="Add vector layer"><svg><use href="#v"/><use href="#b-add" x="14" y="14" width="10" height="10"/></svg></button>
    <button aria-label="Add raster layer"><svg><use href="#raster"/><use href="#b-add" x="14" y="14" width="10" height="10"/></svg></button>
    <button aria-label="Add mesh layer"><svg><use href="#mesh"/><use href="#b-add" x="14" y="14" width="10" height="10"/></svg></button>
    <button aria-label="Add delimited text layer"><svg><use href="#comma"/><use href="#b-add" x="14" y="14" width="10" height="10"/></svg></button>
    <button aria-label="Add SpatiaLite layer"><svg><use href="#feather"/><use href="#b-add" x="14" y="14" width="10" height="10"/></svg></button>
    <button aria-label="Add virtual layer"><svg><use href="#vbox"/><use href="#b-add" x="14" y="14" width="10" height="10"/></svg></button>
    <button class="drop" aria-label="Add PostGIS layer"><svg><use href="#elephant"/><use href="#b-add" x="14" y="14" width="10" height="10"/></svg></button>
    <button class="drop" aria-label="Add WMS layer"><svg><use href="#wms"/><use href="#b-add" x="14" y="14" width="10" height="10"/></svg></button>
    <button aria-label="Add WCS layer"><svg><use href="#globe"/><use href="#b-add" x="14" y="14" width="10" height="10"/></svg></button>
    <button class="drop" aria-label="Add WFS layer"><svg><use href="#wfs"/><use href="#b-add" x="14" y="14" width="10" height="10"/></svg></button>
    <button class="drop" aria-label="New layer"><svg><use href="#v"/><use href="#b-new" x="14" y="14" width="10" height="10"/></svg></button>
  </div>
</aside>

<section class="dock layers">
  <div class="dock-title"><h2>Layers</h2><button aria-label="Float"><svg><use href="#float"/></svg></button><button aria-label="Close"><svg><use href="#close"/></svg></button></div>
  <div class="mini">
    <button class="on" aria-label="Open layer styling"><svg><use href="#brushy"/></svg></button>
    <button aria-label="Add group"><svg><use href="#group"/></svg></button>
    <button aria-label="Manage map themes"><svg><use href="#eye"/></svg></button>
    <button aria-label="Filter legend"><svg><use href="#filter"/></svg></button>
    <button class="drop" aria-label="Filter by expression"><svg><use href="#eps"/></svg></button>
    <button aria-label="Expand all"><svg><use href="#expand"/></svg></button>
    <button aria-label="Collapse all"><svg><use href="#collapse"/></svg></button>
    <button aria-label="Remove layer"><svg><use href="#remove"/></svg></button>
  </div>
  <ul class="tree">
    <li class="sel"><i class="exp"></i><input type="checkbox" id="l1" checked><svg class="sw" viewBox="0 0 16 16"><path d="M.5.5h15v15H.5z" fill="#bfd5e5" stroke="#7d9cb1"/></svg><label for="l1">LKA_districts [25]</label></li>
    <li><i class="exp tri"></i><input type="checkbox" id="l2"><svg class="sw" viewBox="0 0 16 16"><path d="M2 2h12v12H2z" fill="#9db9d8"/><path d="M2 2h3v3H2zM10 2h4v3h-4zM6 6h4v4H6zM2 9h3v2H2zM6 12h3v2H6zM11 10h3v4h-2z" fill="#22395a"/></svg><label for="l2">HRSL_Colombo_Population</label></li>
    <li><i class="exp"></i><input type="checkbox" id="l3"><svg class="sw" viewBox="0 0 16 16"><circle cx="8" cy="8" r="4" fill="#fff" stroke="#dc3c42" stroke-width="1.300"/><path d="M8 5.500v5M5.500 8h5" stroke="#dc3c42" stroke-width="1.600"/></svg><label for="l3">Colombo_clinics</label></li>
    <li><i class="exp"></i><input type="checkbox" id="l4"><svg class="sw" viewBox="0 0 16 16"><path d="M.5.5h15v15H.5z" fill="#fff5f0" stroke="#8c8481"/></svg><label for="l4">Colombo_admin_boundary</label></li>
  </ul>
  <div class="tabs"><button class="cur">Layers</button><button>Browser</button></div>
</section>
<div class="split"></div>

<section class="canvas">
<svg viewBox="475 139 944 910" role="img" aria-label="Map of the districts of Sri Lanka">
<path class="plain" d="M730 515H1100L1103 525 732 530z"/>
<g transform="translate(700 500) scale(.34435)">
<path class="coast" d="M70 60L77 85 78 155 102 235 130 355 138 440 130 448 133 510 150 580 166 660 165 700 152 706 165 765 185 850 165 875 180 950 192 985 204 1020 228 1075 255 1145 255 1165 248 1180 265 1200 285 1255 290 1305 308 1355 330 1385 350 1412 380 1440 405 1458 418 1462 425 1472 460 1482 490 1490 515 1500 535 1505 545 1497 558 1502 558 1515 600 1520 630 1518 647 1530 655 1522 680 1510 730 1500 742 1490 755 1482 785 1458 825 1445 870 1425 930 1410 990 1398 1027 1378 1023 1362 1035 1358 1040 1372 1080 1358 1115 1350 1145 1328 1165 1318 1190 1290 1220 1275 1235 1252 1270 1240 1300 1215 1310 1200 1345 1170 1360 1155 1380 1115 1397 1095 1397 1078 1408 1060 1408 1045 1425 1020 1425 1005 1440 980 1440 945 1450 935 1450 900 1458 870 1473 820 1465 770 1463 700 1467 635 1460 600 1450 575 1440 555 1430 525 1428 490 1415 445 1395 400 1360 355 1330 330 1308 307 1290 300 1275 275 1275 245 1265 232 1257 215 1262 200 1230 190 1208 150 1200 120 1185 75 1170 30"/>
<path class="line" d="M333 70L332 85 340 100 345 130 352 142 365 152 360 205 350 215 360 230 355 236 340 230 335 245 318 248 312 275 295 285 290 298 272 310 266 330 268 352 240 378 235 390 243 400 235 405 225 400 220 415 222 420 207 435 205 500 215 560 230 655M333 70L350 82 375 92 385 98 410 103 440 118 470 122 490 140 510 158 525 158 537 165 538 200 542 222 555 225 562 228 565 250 577 270 575 295 580 308 587 310 590 330 605 350 605 362 618 380 618 405 622 430 633 438 633 455 622 485 634 495 635 520 630 543 620 545 625 560 615 572 600 585 590 580 572 572 562 590 558 608 538 605 535 592 520 583 490 590 492 610 487 625 475 630 440 635 392 672 375 655 370 645 350 628 305 655 290 640 275 633 240 652 232 660 212 658 195 662 180 657 168 660M587 310L605 302 635 278 650 285 670 272 675 262 688 248 690 222 705 215 715 200 750 187 755 155 765 152 755 145 757 100 772 60 778 25 783 15 845 13M750 187L768 200 770 215 780 215 785 207 812 215 797 232 787 300 775 320 757 325 757 375 763 388 785 402 810 390 825 398 830 378 860 378 905 375 950 368 972 373 985 392 1020 405 1048 418 1052 405 1062 400 1065 363 1055 345 1060 330 1055 310 1057 290 1060 270 1062 245 1085 232 1128 233 1125 215 1107 178 1110 30M1065 363L1120 366 1130 380 1155 408 1193 422 1193 440 1188 468 1200 490 1220 497 1240 510 1308 510 1325 500 1337 578 1375 545 1410 545M905 375L905 400 898 430 893 437 892 570 897 600 905 630 918 692 890 708 862 710 850 712 837 715 787 708 780 690 765 675 753 662 763 705 735 740 710 775 690 770 670 785 640 785 615 788 618 798 640 820 655 840 640 868 627 875 605 855 590 830 568 815 562 790 555 765 585 758 600 745 605 740 617 725 600 705 603 685 590 680 590 668 577 662 577 652 538 605M630 543L660 570 690 588 718 585 722 542 735 533 750 548 772 560 790 545 815 533 850 535 865 525 892 523M893 437L915 450 920 480 930 492 940 512 960 505 1000 475 1030 467 1043 478 1042 510 1038 530 1030 550 1038 575 1040 600 1058 625 1083 655 1095 680 1105 672 1115 670 1115 622 1142 617 1142 605 1155 600 1150 580 1175 562 1200 543 1216 543 1213 565 1220 590 1220 630 1230 635 1245 655 1250 680 1262 693 1235 715 1232 745 1243 773 1280 785 1305 795 1303 830 1317 860 1303 1110 1330 1130 1345 1145 1362 1152M1083 655L1060 660 1058 685 1045 700 1028 725 1010 722 1005 712 990 725 988 740 1000 755 1018 780 1050 778 1065 800 1067 825 1055 855 1050 872 1035 880 1030 892 980 918 997 940 980 945 975 955 952 957 952 980 945 1002 962 1012 950 1050 950 1075 963 1085 945 1105 930 1105 922 1125 910 1110 908 1085 892 1075 880 1050 862 1035 845 1048 820 1053 800 1045 790 1028 818 1012 805 1000 790 985 790 970 803 965 795 945 805 938 795 925 797 910 785 890 768 890 790 887 800 870 815 853 860 845 870 810 887 785 883 760 885 740 875 710M568 815L562 828 548 840 552 860 547 890 585 905 585 925 593 937 585 945 583 965 600 980 640 985 690 995 710 990 740 992 775 980 790 970M585 945L560 940 545 938 525 930 500 935 487 943 470 930 455 930 445 915 430 905 410 885 403 875 408 855 385 852 350 855 335 860 325 890 300 892 275 873 250 877 235 870 195 865 187 855M392 672L385 685 387 710 365 718 368 745 372 752 385 750 400 755 385 780 375 800 378 825 385 852M407 880L392 895 382 910 395 930 397 948 385 955 365 948 345 958 345 975 340 982 330 970 325 955 318 968 295 963 265 985 230 993 220 997 210 985 195 983M383 953L390 980 400 1015 415 1035 430 1055 432 1075 455 1090 465 1108 460 1120 490 1165 510 1200 540 1225 585 1240 565 1250 570 1268 585 1285 570 1297 545 1275 530 1265 512 1270 530 1290 548 1310 550 1328 540 1338 520 1335 525 1350 515 1360 515 1385 530 1398 547 1420 525 1440 518 1450 537 1465 520 1480 515 1500M585 1240L605 1238 620 1228 665 1225 660 1252 690 1258 697 1282 690 1310 680 1325 658 1350 668 1362 690 1372 685 1390 700 1405 712 1408 708 1435 690 1447 700 1460 712 1465 710 1480 725 1492 742 1495M510 1200L480 1212 455 1228 460 1268 440 1245 425 1245 410 1235 395 1250 350 1243 320 1225 300 1215 265 1200M697 1282L720 1282 780 1308 825 1307 835 1318 855 1322 878 1330 860 1285 855 1270 845 1255 825 1250 810 1230 808 1190 800 1162 820 1130 830 1095 862 1035M860 1285L918 1262 915 1235 930 1228 930 1218 945 1212 960 1208 1000 1210 1010 1225 1030 1222 1045 1240 1065 1257 1080 1255 1100 1240 1150 1228 1165 1215 1180 1215 1215 1215 1220 1160 1250 1140 1275 1130 1303 1110"/>
</g>
<g transform="translate(680 140) scale(.35714 .33333)">
<path class="coast" d="M123 1141L160 1128 190 1128 196 1110 205 1100 206 1090 213 1085 210 1072 218 1060 214 1050 219 995 229 980 233 925 248 920 265 910 264 890 270 883 278 865 283 858 281 830 284 805 290 797 280 778 272 765 262 745 266 735 267 710 272 695 268 680 256 655 248 640 262 645 270 652 283 650 292 640 300 635 303 628 310 630 318 615 325 608 340 603 345 590 357 572 359 545 368 520 375 510 380 487 388 474 388 445 383 432 388 415 375 403 362 408 362 398 349 396 352 385 347 375 347 357 360 350 400 333 412 325 430 295 415 270 375 230 349 217 365 213 380 225 395 232 410 245 435 258 455 265 465 263 482 278 472 292 482 300 485 312 490 305 497 315 500 306 508 314 515 303 522 310 530 303 545 305 558 295 560 280 550 268 535 255 515 240 495 220 475 207 455 195 425 182 413 185 418 195 423 205 432 200 437 215 425 210 437 228 420 222 390 195 360 182 370 200 395 212 345 187 325 188 315 185 318 178 312 165 300 150 285 158 275 152 272 138 268 130 258 125 256 105 280 88 310 75 337 72 380 80 402 68 430 68 448 62 470 68 490 105 522 158 560 198 620 245 700 315 745 355 810 410 822 435 837 460 850 515 880 570 910 625 938 660 945 680 960 700 975 712 984 706 988 722 1010 757 1050 808 1060 830 1073 845 1070 865 1073 880 1080 895 1078 905 1085 920 1070 915 1063 928 1052 935 1045 930 1030 922 1010 940 1018 955 1035 942 1055 945 1055 965 1060 972 1107 972 1112 945 1123 942 1131 932 1152 950 1160 1000 1172 1040 1180 1090 1186 1112"/>
<path class="coast" d="M226 112L250 110 258 120 248 130 245 147 228 145zM217 152L245 150 252 170 262 163 275 170 265 178 278 185 300 198 316 190 317 210 305 220 285 210 272 198 250 195 240 208 232 205 240 190 225 180 228 165zM190 215L197 222 205 202 212 218 220 208 228 212 228 242 195 232zM170 205l5 12-5 12-4-12zM185 160l-15 8-3 15 8 3 2-14zM196 143l4 10-4 6-3-6zM97 250L105 248 122 265 143 268 147 295 135 301 98 282zM318 296l7 2-3 8-6-3zM296 425l8-12 12 20-6-2-5-6zM125 550L150 544 190 550 220 562 245 580 268 608 235 597 250 615 270 630 255 632 265 640 248 640 215 605 160 572 125 563zM362 180L380 188 400 212 385 210zM242 324h3v2h-3zM18 358h4v2h-4zM92 569h6M112 568h6M1058 800l3 2M177 940l3 20 7 20M180 938l6 38M190 995l3 15M178 1032l-6 20-6 30M180 1035l-10 45M194 1055l-3 15M186 1080l2 10M163 1075l-8 20-5 22 12-6"/>
<path class="water" d="M548 268L556 272 560 264 566 276 575 262 580 272 590 270 596 262 610 270 640 278 660 290 680 300 692 312 675 318 655 318 655 305 640 300 630 290 622 298 615 285 600 283 585 276 570 282zM857 595L868 585 888 605 885 620zM878 622L892 628 905 620 908 640 905 655 890 663 875 650 882 635zM725 340L750 365 735 358zM850 520l8 12-4 14z"/>
<path class="line" d="M475 207L497 160 510 175 560 205 595 235 596 262M598 264L640 276 678 300M388 475L410 474 432 461 449 460 448 430 460 418 480 415 495 417 515 411 562 417 567 410 567 391 634 386 636 365 643 348 655 360 672 374 678 345 690 335 693 315M432 461L435 500 445 520 452 540 447 578 437 582 432 600 424 622 432 630 424 650 500 647 525 643 560 618 581 597 578 557 565 557 565 541 617 539 625 555 633 565 645 565 660 545 674 545 678 533 700 533 715 538 719 563 730 560 742 572 735 594 745 590 757 585 802 608 792 653 782 678M525 643L548 655 553 680 564 700 564 712 530 728 497 735 457 732 446 750 438 770 425 768 420 778 425 787 459 830 462 862 470 870 482 872 492 905 510 912 523 917 530 900 548 893 550 872 565 855 580 830 595 822 632 845 655 825 680 800 700 775 718 750 708 740 700 725 682 717 684 703 718 703 735 692 750 687 782 680 805 670 835 683 855 695 880 730 868 748 860 760 862 785 874 805 880 830 868 845 868 860 880 880 882 892 898 910 903 945 915 958 928 965 912 970 905 990 893 1020 890 1050 905 1062 920 1075 928 1098 960 1098 985 1107 1010 1108 1030 1122 1060 1132 1058 1165 1053 1175 1065 1180 1078 1178 1085 1145 1110 1108 1125 1112 1150 1105 1165 1110 1186 1112M1128 1110V1125M792 653L850 643 870 628 885 628M265 908L280 910 300 912 340 935 346 932 347 838 387 849 459 830M340 935L341 950 325 985 305 1010 287 1017 285 1030 297 1050 302 1080 308 1105 315 1128 335 1128 350 1135 362 1137 377 1153M890 1050L875 1070 872 1093 812 1094 807 1115 803 1135M1055 940l6-15-4-15 8-12 5 18 8-14 4 8-12 8M1052 972l-6 8v14M430 190l8 30-2 38"/>
</g>
<g transform="translate(700 500) scale(.34435)">
<path class="water" d="M112 0L116 15 104 22 108 35 128 40 122 50 105 60 100 70 106 78 120 82 112 90 98 92 92 110 97 140 108 150 118 148 102 165 102 185 110 200 150 208 162 200 160 180 145 162 135 150 145 135 160 105 152 95 140 92 152 80 150 58 140 56 130 45 150 20 158 0zM160 712L178 718 185 755 172 762zM1155 72L1165 72 1168 98 1190 115 1190 132 1175 125 1155 95zM1240 240L1258 235 1248 250 1250 280 1262 305 1258 316 1238 318 1248 310 1236 302 1250 300 1240 270zM1283 355L1300 342 1312 352 1330 352 1338 368 1330 378 1305 368 1290 375zM1340 368L1350 375 1355 362 1362 378 1358 390 1375 405 1372 420 1362 425 1360 440 1354 425 1362 410 1350 402 1355 392 1342 388 1348 380zM1378 430L1395 440 1395 455 1408 470 1402 478 1408 490 1395 505 1400 512 1430 515 1422 530 1430 545 1418 540 1420 562 1408 545 1395 540 1404 525 1392 512 1398 500 1385 490 1398 484 1400 468 1388 450zM1440 735L1450 730 1458 715 1462 745 1452 750 1455 758 1445 757 1448 745z"/>
</g>
</svg>
</section>
<div class="split"></div>

<section class="dock styling">
  <div class="dock-title"><h2>Layer Styling</h2><button aria-label="Float"><svg><use href="#float"/></svg></button><button aria-label="Close"><svg><use href="#close"/></svg></button></div>
  <div class="style-pane">
  <div class="combo"><svg><use href="#poly"/></svg><select class="icon" aria-label="Layer"><option>LKA_districts</option></select></div>
  <div class="style-body">
    <nav class="side-nav">
      <button class="cur" aria-label="Symbology"><svg><use href="#brush"/></svg></button>
      <div>
      <button aria-label="Labels"><svg viewBox="0 0 24 24"><use href="#abc"/><text x="5" y="13" class="glyph abc">abc</text></svg></button>
      <button aria-label="Masks"><svg viewBox="0 0 24 24"><use href="#abcpill"/><text x="1" y="15" class="glyph pill">abc</text></svg></button>
      <button aria-label="3D view"><svg><use href="#cube"/></svg></button>
      <button aria-label="Diagrams"><svg><use href="#tree"/></svg></button>
      <button aria-label="History"><svg><use href="#history"/></svg></button>
      </div>
    </nav>
    <div class="symbology">
      <div class="combo"><svg><use href="#single"/></svg><select class="icon" aria-label="Renderer"><option>Single Symbol</option></select></div>
      <div class="symbol">
        <div class="preview"><span></span></div>
        <ul class="symtree">
          <li class="sel"><i class="tri-d"></i><svg viewBox="0 0 16 16"><path d="M.5.5h15v15H.5z" fill="#bfd5e5" stroke="#7d9cb1"/></svg><b>Fill</b></li>
          <li class="child"><svg viewBox="0 0 16 16"><path d="M.5.5h15v15H.5z" fill="#fff5f0" stroke="#8c8481"/></svg>Simple Fill</li>
        </ul>
        <div class="symbtns">
          <button aria-label="Add symbol layer"><svg><use href="#plus"/></svg></button><button disabled aria-label="Move up"><svg><use href="#up"/></svg></button>
          <button disabled aria-label="Remove symbol layer"><svg><use href="#minus"/></svg></button><button disabled aria-label="Move down"><svg><use href="#down"/></svg></button>
          <button disabled aria-label="Duplicate"><svg><use href="#dup"/></svg></button><button disabled aria-label="Lock color"><svg><use href="#unlock"/></svg></button>
        </div>
      </div>
      <hr>
      <div class="props">
        <div class="form">
          <label for="unit">Unit</label><div class="combo"><select id="unit"><option>Millimeters</option></select></div>
          <label for="opacity">Opacity</label><div class="opac"><input type="range" id="opacity" min="0" max="100" value="100"><span class="spin"><input type="text" value="100.0 %" aria-label="Opacity value"><i></i></span></div>
          <label for="color">Color</label><div class="color"><button id="color" aria-label="Color"><span></span></button><button aria-label="Color menu" class="cmenu"></button></div>
        </div>
        <hr>
        <div class="find">
          <div class="fav"><svg><use href="#search"/></svg><input type="text" value="Favorites" aria-label="Symbol group"><svg class="clear" viewBox="0 0 14 12"><path d="M0 6l4-5h9v10H4z" fill="#8a8a8a"/><path d="M6 3.500l5 5M11 3.500l-5 5" stroke="#fff" stroke-width="1.500"/></svg><button aria-label="Show groups"></button></div>
          <button class="sm" aria-label="Style manager"><svg viewBox="0 0 24 24"><use href="#style"/><text x="13" y="22" class="glyph">a</text></svg></button>
        </div>
        <div class="listbox">
          <div class="items">
            <figure><svg viewBox="0 0 66 58"><path d="M2.500 2.500h62v53h-62z" fill="url(#plasma-r)" stroke="#222"/></svg><figcaption>gradient plasma</figcaption></figure>
            <figure><svg viewBox="0 0 66 58"><path d="M2.500 3.500h61v51h-61z" fill="#959595" stroke="#b5b5b5"/></svg><figcaption>gray 3 fill</figcaption></figure>
            <figure><svg viewBox="0 0 66 58"><path d="M2 12L12 2M2 22L22 2M2 32L32 2M2 42L42 2M2 52L52 2M8 56L62 2M18 56l46-46M28 56l36-36M38 56l26-26M48 56l16-16M58 56l6-6" stroke="#000" stroke-width="1.200"/><path d="M2.500 2.500h61v52h-61z" class="blk"/></svg><figcaption>hashed black /</figcaption></figure>
            <figure><svg viewBox="0 0 66 58"><path d="M64 12L54 2M64 22L44 2M64 32L34 2M64 42L24 2M64 52L14 2M58 56L4 2M48 56L2 10M38 56L2 20M28 56L2 30M18 56L2 40M8 56l-6-6" stroke="#000" stroke-width="1.200"/><path d="M2.500 2.500h61v52h-61z" class="blk"/></svg><figcaption>hashed black \</figcaption></figure>
            <figure><svg viewBox="0 0 66 58"><path d="M2 12L12 2M2 22L22 2M2 32L32 2M2 42L42 2M2 52L52 2M8 56L62 2M18 56l46-46M28 56l36-36M38 56l26-26M48 56l16-16M58 56l6-6M64 12L54 2M64 22L44 2M64 32L34 2M64 42L24 2M64 52L14 2M58 56L4 2M48 56L2 10M38 56L2 20M28 56L2 30M18 56L2 40M8 56l-6-6" stroke="#000" stroke-width="1.300"/><path d="M2.500 2.500h61v52h-61z" class="blk"/></svg><figcaption>hashed black X</figcaption></figure>
            <figure><svg viewBox="0 0 66 58"><rect x="2" y="3" width="62" height="52" rx="1" fill="#fff" stroke="#377eb8" stroke-width="3.500"/></svg><figcaption>outline blue</figcaption></figure>
            <figure><svg viewBox="0 0 66 58"><rect x="2" y="3" width="62" height="52" rx="1" fill="#fff" stroke="#4daf4a" stroke-width="3.500"/></svg><figcaption>outline green</figcaption></figure>
            <figure><svg viewBox="0 0 66 58"><rect x="2" y="3" width="62" height="52" rx="1" fill="#fff" stroke="#e41a1c" stroke-width="3.500"/></svg><figcaption>outline red</figcaption></figure>
            <figure><svg viewBox="3 2 66 58"><path d="M5 5h61v52H5z" fill="#f4f4f4" stroke="#9a9a9a" stroke-width="2"/><g fill="#4daf4a" stroke="#2b6b2b" stroke-width=".6"><circle cx="5" cy="5" r="4"/><circle cx="39" cy="5" r="4"/><circle cx="66" cy="12" r="4"/><circle cx="66" cy="46" r="4"/><circle cx="43" cy="57" r="4"/><circle cx="9" cy="57" r="4"/><circle cx="5" cy="27" r="4"/></g><g fill="#e41a1c" stroke="#8b1010" stroke-width=".6"><circle cx="22" cy="5" r="4"/><circle cx="56" cy="5" r="4"/><circle cx="66" cy="29" r="4"/><circle cx="60" cy="57" r="4"/><circle cx="26" cy="57" r="4"/><circle cx="5" cy="44" r="4"/><circle cx="5" cy="10" r="4"/></g></svg><figcaption>outline xpattern</figcaption></figure>
            <figure><svg viewBox="0 0 66 58"><path d="M2.500 3h61v52h-61z" fill="url(#dots)"/><path d="M2.500 3h61v52h-61z" fill="none" stroke="#222" stroke-width="1.300"/></svg><figcaption>pattern dot black</figcaption></figure>
            <figure><svg viewBox="0 0 66 58"><path d="M2 3h62v53H2z" fill="#ffbe5c"/><path d="M7 3h10l-5 9zM25 3h10l-5 9zM44 3h10l-5 9zM6 13h18l-9 17zM25 13h18l-9 17zM43 13h18l-9 17zM2 31h10l-7 15-3-4zM14 31h19l-9 17zM33 31h18l-9 17zM51 31h13v15l-3 2zM2 49h62v7h-3l-3-5-3 5H41l-3-5-3 5H24l-3-5-3 5H8l-2-5-3 5H2z" fill="#ff620f"/><path d="M2.500 3.500h61v52h-61z" fill="none" stroke="#f57c1f"/></svg><figcaption>pattern zelda</figcaption></figure>
            <figure><svg viewBox="0 0 66 58"><path d="M2.500 3.500h62v53h-62z" fill="#377eb8" stroke="#2a648f"/></svg><figcaption>simple blue fill</figcaption></figure>
          </div>
          <div class="scroll"><i class="su"></i><i class="thumb"></i><i class="track"></i><i class="sd"></i></div>
        </div>
        <div class="acts">
          <button class="view on" aria-label="Icon view"><svg><use href="#grid"/></svg></button><button class="view flat" aria-label="List view"><svg><use href="#table"/></svg></button>
          <button class="push save">Save Symbol…</button><button class="push adv">Advanced</button>
        </div>
      </div>
      <h3><i></i>Layer Rendering</h3>
      <div class="foot">
        <button class="view" aria-label="Undo style"><svg><use href="#undo"/></svg></button><button class="view" aria-label="Redo style"><svg><use href="#redo"/></svg></button>
        <label class="live"><input type="checkbox" checked>Live update</label>
        <button class="push apply"><svg><use href="#check"/></svg>Apply</button>
      </div>
    </div>
  </div>
  </div>
  <div class="tabs"><button class="cur">Layer Styling</button><button>Processing Toolbox</button></div>
</section>
</main>

<footer class="status">
  <div class="locate"><svg><use href="#search"/></svg><input type="text" placeholder="Type to locate (Ctrl+K)" aria-label="Locate"></div>
  <label for="coord">Coordinate</label><input class="coord" id="coord" type="text" value="80.583,9.929">
  <button class="st cross" aria-label="Toggle extents"><svg><use href="#crosshair"/></svg></button>
  <label for="scale">Scale</label><div class="combo scale"><select id="scale"><option>1:1724222</option></select></div>
  <button class="st" aria-label="Lock scale"><svg><use href="#lock"/></svg></button>
  <label for="mag">Magnifier</label><span class="spin mag"><input id="mag" type="text" value="100%"><i></i></span>
  <label for="rot">Rotation</label><span class="spin rot"><input id="rot" type="text" value="0.0 °"><i></i></span>
  <label class="render"><input type="checkbox" checked>Render</label>
  <button class="st crs"><svg><use href="#crs"/></svg>EPSG:4326</button>
  <button class="st msg" aria-label="Messages"><svg><use href="#msg"/></svg></button>
</footer>
</div>
</body>
</html>
```
FILE: styles.css
```css
* { box-sizing: border-box; }
body { margin: 0; font: 13px/16px "DejaVu Sans", sans-serif; color: #111; background: #efefef; }
button, input, select { font: inherit; color: inherit; margin: 0; padding: 0; }
button { border: 0; background: none; }
h1, h2, h3, ul, figure { margin: 0; padding: 0; font: inherit; list-style: none; }
svg { display: block; flex: none; }
.sprite { position: absolute; width: 0; height: 0; }
.glyph { font: 11px "DejaVu Sans", sans-serif; fill: #333; }
.s7 { font-size: 7px; }
.info { font: italic bold 17px "DejaVu Serif", serif; fill: #fff; }
.serif { font: bold 13px "DejaVu Serif", serif; }
.abc { font: bold 8px "DejaVu Sans", sans-serif; }
.red { fill: #f22; }
.help { font: 15px "DejaVu Serif", serif; fill: #fff; }
.pill { font: bold 10px "DejaVu Sans", sans-serif; }

.window { display: flex; flex-direction: column; height: 100vh; border: 1px solid #8f8f8f; }
.titlebar { display: grid; grid-template-columns: 1fr auto 1fr; align-items: center; height: 37px; background: #353535; border-bottom: 1px solid #1e1e1e; color: #fff; flex: none; }
.titlebar h1 { grid-column: 2; font: bold 12px/16px "Noto Sans", sans-serif; }
.wm { display: flex; justify-content: flex-end; gap: 16px; padding-right: 9px; }
.wm svg { width: 18px; height: 18px; }
.menubar { display: flex; gap: 15px; padding: 0 10px; height: 22px; align-items: center; border-bottom: 1px solid #d0d0d0; flex: none; }
.menubar u { text-underline-offset: 2px; }

.toolbar { display: flex; height: 39px; align-items: center; background: linear-gradient(#fafafa, #ececec); border-bottom: 1px solid #b4b4b4; flex: none; }
.tool { width: 33px; height: 33px; display: flex; align-items: center; justify-content: center; border: 1px solid transparent; border-radius: 3px; }
.tool svg { width: 24px; height: 24px; }
.tool.on, .mini .on, .view.on { background: #dcdcdc; border: 1px solid #aaa; border-radius: 3px; }
button:disabled svg { opacity: .4; filter: grayscale(.7); }
.tool.drop { width: 45px; gap: 5px; }
.drop::after, .combo::after { content: ""; border: 4px solid transparent; border-top: 5px solid #555; border-bottom: 0; }
.drop:disabled::after { border-top-color: #ccc; }
.grip { width: 16px; height: 18px; background: radial-gradient(circle, #aaa 1px, transparent 1px) 5px 0 / 3px 3px repeat-y, radial-gradient(circle, #aaa 1px, transparent 1px) 8px 0 / 3px 3px repeat-y; flex: none; }
.grip:first-child { width: 12px; }
.grip.wide { width: 17px; }
.sep { width: 7px; height: 28px; border-left: 1px solid #ccc; margin-left: 2px; margin-right: -2px; }

.work { display: flex; flex: 1; min-height: 0; }
.sidebar { width: 51px; background: linear-gradient(90deg, #fafafa, #ececec); border-right: 1px solid #b4b4b4; margin-right: 1px; flex: none; }
.grip-h { display: block; height: 12px; background: radial-gradient(circle, #aaa 1px, transparent 1px) 0 4px / 3px 3px repeat-x, radial-gradient(circle, #aaa 1px, transparent 1px) 0 7px / 3px 3px repeat-x; margin: 0 14px 0 18px; }
.sidebar button { display: flex; align-items: center; height: 32px; }
.sidebar svg { width: 24px; height: 24px; }
.tools-a { padding-left: 14px; margin-bottom: 7px; }
.tools-b { padding-left: 8px; }
.sep-h { display: block; border-top: 1px solid #ccc; margin: 3px 8px 3px -4px; }
.sidebar .drop { gap: 6px; }

.dock { display: flex; flex-direction: column; flex: none; }
.layers { width: 415px; }
.styling { width: 495px; }
.dock-title { display: flex; align-items: center; gap: 2px; height: 20px; padding: 0 2px 0 4px; flex: none; }
.dock-title h2 { flex: 1; }
.dock-title svg { width: 12px; height: 12px; }
.mini { display: flex; align-items: center; height: 30px; padding: 0 0 2px 4px; gap: 1px; flex: none; }
.mini button { width: 24px; height: 24px; display: flex; align-items: center; justify-content: center; }
.mini svg { width: 16px; height: 16px; }
.mini .drop { width: 36px; gap: 5px; }
.tree { flex: 1; background: #fff; border: 1px solid #b4b4b4; }
.tree li { display: flex; align-items: center; height: 19px; font: italic bold 13px/16px "DejaVu Sans", sans-serif; color: #808080; padding-left: 3px; }
.tree .sel { background: #308cc6; color: #fff; font-style: normal; }
.tree .sel label { text-decoration: underline; }
.exp { width: 20px; flex: none; }
.tri::before { content: ""; display: block; width: 0; margin-left: 5px; border: 4px solid transparent; border-left: 5px solid #444; border-right: 0; }
.tree svg { width: 16px; height: 16px; margin: 0 6px; }
input[type=checkbox] { appearance: none; width: 14px; height: 14px; border: 1px solid #aaa; border-radius: 1px; background: #fff; display: grid; place-items: center; flex: none; }
input[type=checkbox]:checked::before { content: ""; width: 4px; height: 8px; border: solid #000; border-width: 0 2px 2px 0; transform: rotate(38deg); margin-top: -2px; }
.tabs { display: flex; align-items: flex-start; height: 27px; border-top: 1px solid #b4b4b4; margin-top: 2px; flex: none; }
.tabs button { height: 24px; padding: 0 11px 1px; background: #dadada; border: 1px solid #b4b4b4; border-top: 0; border-radius: 0 0 3px 3px; }
.tabs .cur { height: 27px; background: #f4f4f4; margin-top: -1px; }
.split { width: 6px; flex: none; display: grid; place-items: center; }
.split::before { content: ""; width: 3px; height: 18px; background: radial-gradient(circle, #aaa 1px, transparent 1px) 0 0 / 3px 3px; }
.canvas { flex: 1; min-width: 0; background: #fff; border: 1px solid #b4b4b4; border-top-color: #efefef; }
.canvas svg { width: 100%; height: 100%; }
.coast, .line, .water { stroke: #303030; stroke-width: 1; vector-effect: non-scaling-stroke; stroke-linejoin: round; }
.coast, .plain { fill: #fff5f0; }
.water { fill: #fff; }
.line { fill: none; }

.style-pane { flex: 1; display: flex; flex-direction: column; gap: 6px; padding: 2px 3px 3px; min-height: 0; }
.combo { display: grid; grid-template-columns: 1fr auto; align-items: center; height: 25px; flex: none; }
.combo > * { grid-area: 1 / 1; z-index: 1; pointer-events: none; }
.combo > select { grid-column: 1 / 3; z-index: 0; pointer-events: auto; width: 100%; height: 25px; appearance: none; padding: 0 4px; border: 1px solid #aaa; border-radius: 3px; background: linear-gradient(#fdfdfd, #ececec); }
.combo > .icon { padding-left: 24px; }
.combo > svg { width: 16px; height: 16px; margin-left: 6px; }
.combo::after { grid-area: 1 / 2; margin-right: 7px; z-index: 1; }
.style-body { flex: 1; display: flex; gap: 3px; min-height: 0; }
.side-nav { width: 38px; display: flex; flex-direction: column; flex: none; }
.side-nav button { width: 38px; height: 32px; display: grid; place-items: center; padding-right: 8px; }
.side-nav svg { width: 22px; height: 22px; }
.side-nav .cur { padding-right: 3px; }
.side-nav > div { background: #5c5c5c; flex: 1; }
.symbology { flex: 1; min-width: 0; display: flex; flex-direction: column; }
.symbol { display: flex; gap: 6px; height: 142px; padding-top: 6px; flex: none; }
.preview { flex: 1; display: grid; place-items: center; }
.preview span { width: 61px; height: 61px; border: 1px solid #222; background: #fff5f0; margin-top: -6px; }
.symtree { width: 256px; height: 119px; margin-top: 5px; background: #fff; border: 1px solid #b4b4b4; }
.symtree li { display: flex; align-items: center; gap: 6px; height: 19px; }
.symtree svg { width: 16px; height: 16px; }
.symtree .sel { background: #308cc6; color: #fff; padding-left: 6px; }
.symtree .child { padding-left: 43px; }
.tri-d { border: 4px solid transparent; border-top: 5px solid #134f75; border-bottom: 0; margin-right: 3px; }
.symbtns { display: grid; grid-template-columns: 28px 28px; grid-auto-rows: 24px; gap: 4px 6px; }
.symbtns button, .view, .push, .color button { display: flex; align-items: center; justify-content: center; border: 1px solid #aaa; border-radius: 3px; background: linear-gradient(#fdfdfd, #ececec); }
.symbtns button:disabled { border-color: #c8c8c8; }
.symbtns svg, .view svg { width: 15px; height: 15px; }
hr { width: 100%; border: 0; border-top: 1px solid #999; margin: 0; flex: none; }
.props { margin-right: 9px; flex: 1; display: flex; flex-direction: column; min-height: 0; }
.form { display: grid; grid-template-columns: 50px 1fr; align-items: center; height: 153px; align-content: start; padding-top: 8px; flex: none; }
.opac { display: flex; gap: 4px; align-items: center; height: 25px; }
.opac input[type=range] { flex: 1; min-width: 0; appearance: none; height: 13px; background: linear-gradient(#2076b0, #3daee9 2px, #2d90cc 4px, #1f6fa5) center / 100% 5px no-repeat; }
input[type=range]::-webkit-slider-thumb { appearance: none; width: 13px; height: 13px; border: 1px solid #aaa; border-radius: 3px; background: #fdfdfd; }
.spin { display: flex; width: 100px; height: 23px; border: 1px solid #aaa; border-radius: 3px; background: #fff; overflow: hidden; }
.spin input { flex: 1; min-width: 0; border: 0; background: none; padding-left: 4px; }
.spin i { width: 14px; border-left: 1px solid #bbb; background: #f4f4f4; display: flex; flex-direction: column; align-items: center; justify-content: center; gap: 4px; }
.spin i::before, .spin i::after { content: ""; border: 4px solid transparent; }
.spin i::before { border-bottom: 4px solid #555; border-top: 0; }
.spin i::after { border-top: 4px solid #555; border-bottom: 0; }
.opac .spin i::before { border-bottom-color: #aaa; }
.color { display: flex; height: 28px; }
.color button { flex: 1; padding: 5px 4px; }
.color span { width: 100%; height: 16px; background: #fff5f0; border-radius: 2px; }
.color .cmenu { flex: none; width: 12px; padding: 0; }
.cmenu::after, .fav button::after, .adv::after { content: ""; border: 4px solid transparent; border-top: 4px solid #555; border-bottom: 0; }
.find { display: flex; align-items: center; height: 25px; margin: 6px 0 4px; flex: none; }
.fav { flex: 1; display: flex; align-items: center; height: 25px; border: 1px solid #aaa; border-radius: 3px; background: #fff; padding-left: 9px; }
.fav svg { width: 14px; height: 14px; }
.fav input { flex: 1; min-width: 0; border: 0; background: none; padding-left: 6px; outline: 0; }
.fav button { width: 20px; height: 23px; margin-left: 8px; display: grid; place-items: center; border-left: 1px solid #bbb; background: linear-gradient(#fdfdfd, #ececec); }
.sm { width: 30px; padding-left: 10px; }
.sm svg { width: 16px; height: 16px; }
.listbox { flex: 1; min-height: 0; display: flex; background: #fff; border: 1px solid #b4b4b4; }
.items { flex: 1; display: grid; grid-template-columns: repeat(4, 101px); grid-auto-rows: 119px; padding: 17px 0 0 3px; overflow: hidden; }
.items figure { display: flex; flex-direction: column; align-items: center; font-size: 12px; line-height: 15px; text-align: center; }
.items svg { width: 66px; height: 60px; overflow: visible; margin: 0 2px 13px 0; }
.items figcaption { padding: 0 6px; }
.blk { fill: none; stroke: #000; stroke-width: 1.500; }
.scroll { width: 14px; display: flex; flex-direction: column; border-left: 1px solid #b4b4b4; background: #e0e0e0; }
.scroll i { display: grid; place-items: center; }
.su, .sd { height: 14px; background: #fafafa; }
.su::before, .sd::before { content: ""; border: 4px solid transparent; }
.su::before { border-bottom: 4px solid #555; border-top: 0; }
.sd::before { border-top: 4px solid #555; border-bottom: 0; }
.thumb { flex: 260; background: #fafafa; border: solid #b4b4b4; border-width: 1px 0; }
.track { flex: 80; border-bottom: 1px solid #b4b4b4; }
.acts { display: flex; gap: 6px; align-items: center; height: 37px; flex: none; }
.view { width: 24px; height: 23px; }
.flat { border-color: transparent; background: none; margin-left: -6px; }
.push { height: 25px; padding: 0 3px; }
.save { margin-left: auto; }
.adv { gap: 6px; }
.symbology h3 { display: flex; align-items: center; height: 39px; padding: 10px 0 0; font-weight: bold; flex: none; }
.symbology h3 i { border: 5px solid transparent; border-left: 7px solid #333; border-right: 0; margin: 0 11px 0 5px; }
.foot { display: flex; gap: 6px; align-items: center; height: 25px; flex: none; }
.live { display: flex; gap: 5px; align-items: center; margin-left: auto; }
.apply { width: 80px; margin-left: 7px; }
.apply svg { width: 16px; height: 16px; }

.status { display: flex; align-items: center; height: 31px; padding: 0 6px 0 4px; font-size: 11px; flex: none; }
.locate { display: flex; align-items: center; width: 270px; height: 25px; border: 1px solid #aaa; border-radius: 3px; background: #fff; padding-left: 8px; margin-right: auto; font-size: 13px; }
.locate svg { width: 14px; height: 14px; }
.locate input { flex: 1; border: 0; background: none; padding-left: 7px; outline: 0; }
.locate input::placeholder { color: #808080; opacity: 1; }
.coord { width: 91px; height: 23px; border: 1px solid #aaa; border-radius: 3px; text-align: center; margin-left: 4px; background: #fff; }
.st { display: flex; align-items: center; margin: 0 6px; }
.st svg { width: 16px; height: 16px; }
.cross { margin: 0 12px 0 4px; }
.scale { width: 98px; margin: 0 3px 0 4px; height: 24px; }
.scale > select { height: 24px; background: linear-gradient(90deg, #fff 75px, #bbb 75px, #bbb 76px, #f6f6f6 76px); }
.mag { width: 98px; margin: 0 10px 0 4px; }
.rot { width: 94px; margin: 0 6px 0 10px; }
.render { display: flex; align-items: center; gap: 5px; margin-right: 10px; }
.crs { gap: 2px; }
.msg { margin: 0 0 0 18px; }
```
